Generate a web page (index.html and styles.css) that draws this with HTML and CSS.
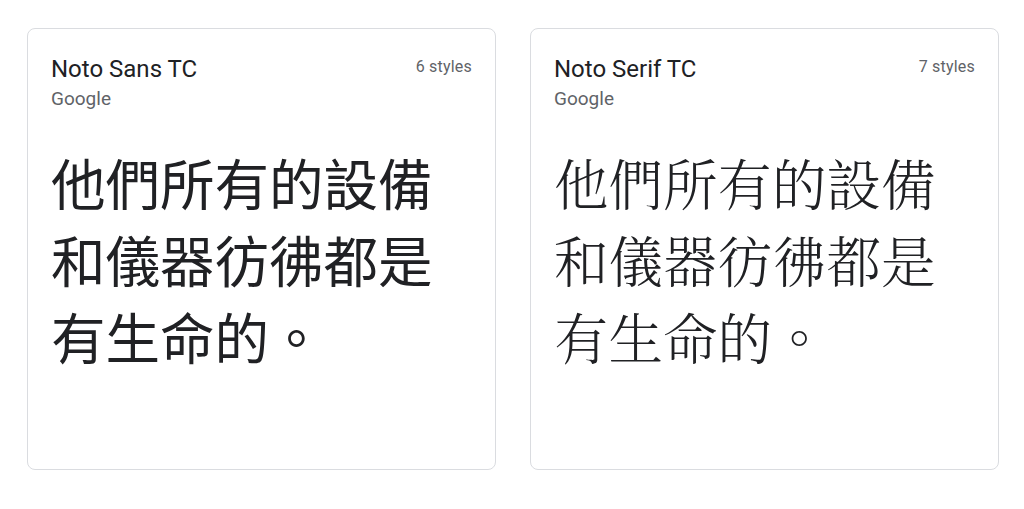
FILE: index.html
```html
<!DOCTYPE html>
<html lang="zh-Hant">
<head>
    <meta charset="UTF-8">
    <meta name="viewport" content="width=device-width, initial-scale=1.0">
    <title>Fonts</title>
    <link rel="stylesheet" href="styles.css">
</head>
<body>
    <div class="grid">
        <div class="card">
            <div class="card-head">
                <div>
                    <div class="family">Noto Sans TC</div>
                    <div class="foundry">Google</div>
                </div>
                <div class="styles">6 styles</div>
            </div>
            <p class="sample sans">他們所有的設備和儀器彷彿都是有生命的。</p>
        </div>
        <div class="card">
            <div class="card-head">
                <div>
                    <div class="family">Noto Serif TC</div>
                    <div class="foundry">Google</div>
                </div>
                <div class="styles">7 styles</div>
            </div>
            <p class="sample serif">他們所有的設備和儀器彷彿都是有生命的。</p>
        </div>
    </div>
</body>
</html>
```

FILE: styles.css
```css
body {
    margin: 0;
    padding: 28px 26px 0 27px;
    background-color: #fff;
    font-family: Roboto, "Noto Sans", sans-serif;
    color: #202124;
}

.grid {
    display: grid;
    grid-template-columns: 469px 469px;
    column-gap: 34px;
}

.card {
    height: 442px;
    box-sizing: border-box;
    border: 1px solid #dadce0;
    border-radius: 8px;
    padding: 24px 23px 0 23px;
}

.card-head {
    display: flex;
    justify-content: space-between;
    align-items: flex-start;
}

.family {
    font-size: 24px;
    line-height: 32px;
    color: #202124;
}

.foundry {
    font-size: 19px;
    line-height: 27px;
    color: #5f6368;
}

.styles {
    font-size: 16px;
    line-height: 27px;
    color: #5f6368;
    letter-spacing: 0.2px;
}

.sample {
    margin: 31px 0 0 0;
    font-size: 54.5px;
    line-height: 77px;
    color: #202124;
    word-break: break-all;
}

.sans {
    font-family: "Noto Sans CJK TC", sans-serif;
}

.serif {
    font-family: "Noto Serif CJK TC", "Noto Serif TC", "Noto Sans CJK TC", serif;
    font-weight: 300;
}
```
